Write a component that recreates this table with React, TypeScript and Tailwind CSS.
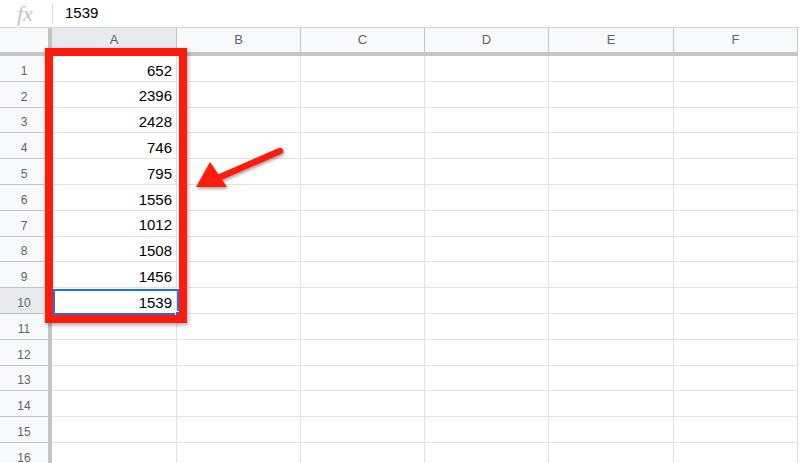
import React from "react";

const VALUES = [652, 2396, 2428, 746, 795, 1556, 1012, 1508, 1456, 1539];
const COLS = [
  { id: "A", w: "w-[125px]" },
  { id: "B", w: "w-[124px]" },
  { id: "C", w: "w-[124px]" },
  { id: "D", w: "w-[124px]" },
  { id: "E", w: "w-[125px]" },
  { id: "F", w: "w-[124px]" },
];
const ROWS = Array.from({ length: 17 }, (_, i) => i + 1);

export default function App() {
  return (
    <div className="relative w-[800px] h-[463px] overflow-hidden bg-white font-['Liberation_Sans',Arial,sans-serif]">
      {/* formula bar */}
      <div className="flex items-center h-[28px] border-b border-[#d6d6d6]">
        <span className="w-[52px] pl-[17px] text-[22px] italic text-[#c4c4c4] font-['Liberation_Serif',serif] leading-none">
          fx
        </span>
        <span className="w-px h-[19px] bg-[#d8d8d8]" />
        <span className="pl-[12px] text-[15px] text-black">1539</span>
      </div>

      {/* column headers */}
      <div className="flex h-[28px]">
        <div className="w-[52px] shrink-0 bg-[#f8f9fa] border-r-4 border-b-4 border-[#c4c4c4]" />
        {COLS.map((c) => (
          <div
            key={c.id}
            className={`${c.w} shrink-0 flex items-center justify-center border-r border-b-4 border-[#c4c4c4] text-[13px] text-[#5f6368] ${
              c.id === "A" ? "bg-[#e8eaed]" : "bg-[#f8f9fa]"
            }`}
          >
            {c.id}
          </div>
        ))}
      </div>

      {/* rows */}
      {ROWS.map((r) => (
        <div key={r} className="flex h-[25.8px]">
          <div
            className={`w-[52px] shrink-0 flex items-center justify-center pt-[5px] border-r-4 border-b border-[#c4c4c4] text-[12px] text-[#5f6368] ${
              r === 10 ? "bg-[#e8eaed]" : "bg-[#f8f9fa]"
            }`}
          >
            {r}
          </div>
          {COLS.map((c) => (
            <div
              key={c.id}
              className={`${c.w} shrink-0 flex items-center justify-end pt-[5px] pr-[4px] border-r border-b border-[#e2e2e2] text-[15px] text-black`}
            >
              {c.id === "A" && r <= 10 ? VALUES[r - 1] : ""}
            </div>
          ))}
        </div>
      ))}

      {/* active cell A10 */}
      <div className="absolute left-[53px] top-[289px] w-[126px] h-[26px] border-2 border-[#1a73e8]">
        <div className="absolute -right-[4px] -bottom-[4px] w-[6px] h-[6px] bg-[#1a73e8] border border-white" />
      </div>

      {/* red highlight box */}
      <div className="absolute left-[45px] top-[48px] w-[142px] h-[275px] border-[8px] border-[#ff1a0a] shadow-[1px_2px_4px_rgba(0,0,0,0.35)]" />

      {/* arrow */}
      <svg className="absolute left-[190px] top-[140px]" width="105" height="60" viewBox="0 0 105 60">
        <defs>
          <filter id="sh" x="-20%" y="-20%" width="140%" height="140%">
            <feDropShadow dx="1" dy="2" stdDeviation="1.5" floodColor="#000" floodOpacity="0.35" />
          </filter>
        </defs>
        <g filter="url(#sh)">
          <line x1="90" y1="11" x2="28" y2="38" stroke="#ff1a0a" strokeWidth="6.5" strokeLinecap="round" />
          <polygon points="6,47 20,22 37,47" fill="#ff1a0a" />
        </g>
      </svg>
    </div>
  );
}
